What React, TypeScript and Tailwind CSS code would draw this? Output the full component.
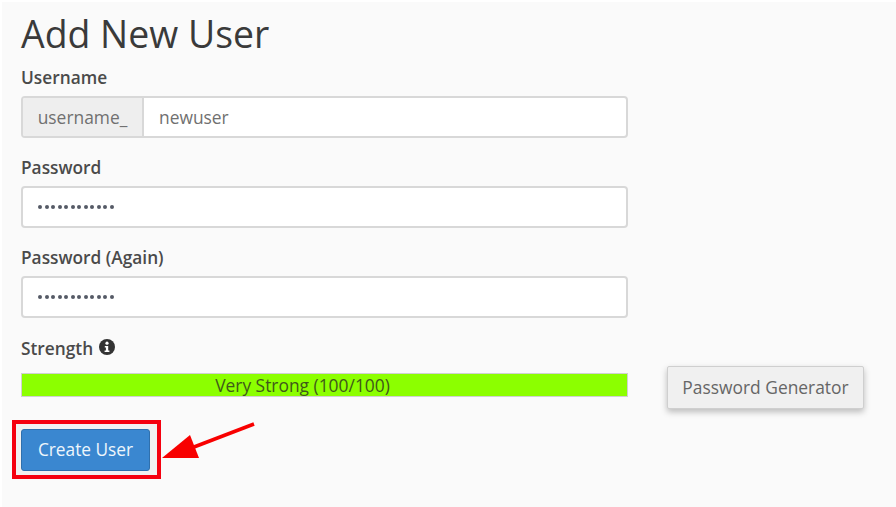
import React from "react";

const font = "font-['Open_Sans',sans-serif]";
const inputBox = "h-[42px] w-[607px] rounded-[4px] border-2 border-[#d8d8d8] bg-white flex items-center";

const Dots = () => (
  <span className="flex gap-[2.5px] pl-[15px]">
    {Array.from({ length: 12 }).map((_, i) => (
      <span key={i} className="block w-[4px] h-[4px] rounded-full bg-[#555a66]" />
    ))}
  </span>
);

const Label = ({ children }: { children: React.ReactNode }) => (
  <div className="h-[22px] text-[17.3px] leading-[22px] font-semibold text-[#4a4a4a]">{children}</div>
);

const App = () => {
  return (
    <div className={`${font} relative w-[896px] h-[507px] bg-white pl-[2px] pt-[2px] overflow-hidden`}>
      <div className="h-full w-full bg-[#fafafa] pl-[19px]">
        {/* Title */}
        <h1 className="h-[65px] pt-[9px] text-[37.4px] leading-[46px] font-normal text-[#3a3a3a]">Add New User</h1>

        {/* Username */}
        <Label>Username</Label>
        <div className={`${inputBox} mt-[7px] overflow-hidden`}>
          <div className="h-full w-[121px] bg-[#eeeeee] border-r-2 border-[#d8d8d8] flex items-center justify-center text-[17.4px] text-[#707070]">
            username_
          </div>
          <span className="pl-[15px] text-[17.4px] text-[#707070]">newuser</span>
        </div>

        {/* Password */}
        <div className="mt-[19px]">
          <Label>Password</Label>
        </div>
        <div className={`${inputBox} mt-[7px]`}>
          <Dots />
        </div>

        <div className="mt-[19px]">
          <Label>Password (Again)</Label>
        </div>
        <div className={`${inputBox} mt-[7px]`}>
          <Dots />
        </div>

        {/* Strength */}
        <div className="mt-[20px] flex items-center gap-[6px]">
          <Label>Strength</Label>
          <svg width="16" height="16" viewBox="0 0 16 16" className="-mt-[4px]">
            <circle cx="8" cy="8" r="8" fill="#333" />
            <circle cx="8" cy="4.2" r="1.6" fill="#fff" />
            <path d="M5.8 7h3.4v4.6h1.2v1.4H5.6v-1.4h1.3V8.4H5.8z" fill="#fff" />
          </svg>
        </div>

        <div className="flex items-start mt-[13px]">
          <div className="w-[607px] h-[24px] pr-[44px] bg-[#8cff00] border border-[#d0d0d0] flex items-center justify-center text-[17.4px] text-[#3f5a1a]">
            Very Strong (100/100)
          </div>
          <button className="ml-[39px] -mt-[7px] w-[197px] h-[43px] rounded-[2px] bg-[#f0f0f0] border border-[#cfcfcf] shadow-[0_3px_6px_rgba(0,0,0,0.25)] text-[17.4px] text-[#666] flex items-center justify-center">
            Password Generator
          </button>
        </div>

        {/* Create User */}
        <div className="mt-[11px] -ml-[9px] w-[149px] h-[59px] border-[4px] border-[#f5000f] bg-[#f1f1f1] pl-[5px] flex items-center">
          <button className="w-[129px] h-[42px] rounded-[3px] bg-[#3a87d0] border border-[#2f70ad] text-[17.3px] text-[#eef6fc]">
            Create User
          </button>
        </div>
      </div>

      {/* Arrow annotation */}
      <svg width="110" height="50" viewBox="0 0 110 50" className="absolute left-[158px] top-[418px]">
        <path d="M96 6 L36 29" stroke="#f80000" strokeWidth="3.5" fill="none" />
        <path d="M4 40 L32 17 L41 40 Z" fill="#f80000" />
      </svg>
    </div>
  );
};

export default App;
